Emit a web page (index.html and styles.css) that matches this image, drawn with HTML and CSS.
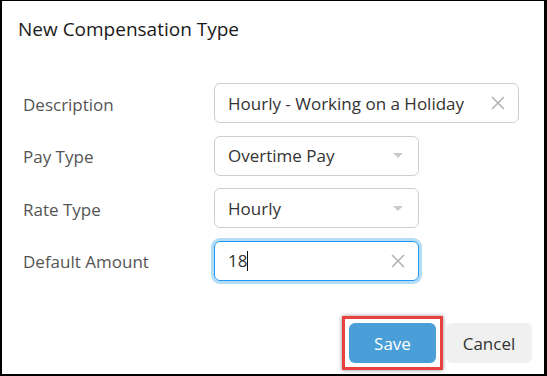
FILE: index.html
```html
<!doctype html>
<html>
<head>
    <meta charset="utf-8">
    <title>New Compensation Type</title>
    <link rel="stylesheet" href="styles.css">
</head>
<body>
    <div class="frame">
        <div class="dialog">
            <h1 class="dialog-title">New Compensation Type</h1>

            <div class="form">
                <label class="field-label">Description</label>
                <div class="input input-wide">
                    <span class="input-text">Hourly - Working on a Holiday</span>
                    <svg class="clear-icon" width="16" height="16" viewBox="0 0 16 16">
                        <path d="M2 2 L14 14 M14 2 L2 14" stroke="#b3b3b3" stroke-width="1.6" fill="none"/>
                    </svg>
                </div>

                <label class="field-label">Pay Type</label>
                <div class="input input-narrow">
                    <span class="input-text">Overtime Pay</span>
                    <span class="caret"></span>
                </div>

                <label class="field-label">Rate Type</label>
                <div class="input input-narrow">
                    <span class="input-text">Hourly</span>
                    <span class="caret"></span>
                </div>

                <label class="field-label">Default Amount</label>
                <div class="input input-narrow input-focus">
                    <span class="input-text">18<span class="cursor"></span></span>
                    <svg class="clear-icon" width="16" height="16" viewBox="0 0 16 16">
                        <path d="M2 2 L14 14 M14 2 L2 14" stroke="#b3b3b3" stroke-width="1.6" fill="none"/>
                    </svg>
                </div>
            </div>

            <div class="actions">
                <div class="highlight">
                    <button class="btn btn-save">Save</button>
                </div>
                <button class="btn btn-cancel">Cancel</button>
            </div>
        </div>
    </div>
</body>
</html>
```

FILE: styles.css
```css
html, body {
    margin: 0;
    padding: 0;
    background: #000;
}

body {
    width: 547px;
    height: 376px;
    font-family: "Open Sans", "Noto Sans", sans-serif;
}

.frame {
    box-sizing: border-box;
    width: 547px;
    height: 376px;
    padding: 1px 3px 2px 2px;
    background: #000;
}

.dialog {
    background: #fff;
    height: 100%;
    display: flex;
    flex-direction: column;
}

.dialog-title {
    margin: 0;
    padding: 16px 0 0 16px;
    font-size: 19px;
    font-weight: 400;
    line-height: 24px;
    color: #1a1a1a;
}

.form {
    display: grid;
    grid-template-columns: 191px auto;
    row-gap: 12.5px;
    padding: 42px 0 0 21px;
    align-items: center;
}

.field-label {
    font-size: 17px;
    color: #555;
    padding-top: 2px;
}

/* inputs */
.input {
    box-sizing: border-box;
    height: 40px;
    border: 1px solid #cfcfcf;
    border-radius: 6px;
    display: flex;
    align-items: center;
    justify-content: space-between;
    padding: 0 12px 0 13px;
    font-size: 17px;
    color: #333;
}

.input-wide {
    width: 305px;
}

.input-narrow {
    width: 205px;
}

.input-focus {
    border-color: #2196f3;
    box-shadow: 0 0 0 3px #b3dcf7;
}

.cursor {
    display: inline-block;
    width: 1px;
    height: 20px;
    background: #111;
    vertical-align: -4px;
}

.caret {
    width: 0;
    height: 0;
    border-left: 5px solid transparent;
    border-right: 5px solid transparent;
    border-top: 5px solid #cacaca;
    margin-right: 3px;
}

/* buttons */
.actions {
    margin-top: auto;
    display: flex;
    justify-content: flex-end;
    align-items: center;
    gap: 3px;
    padding: 0 12px 4px 0;
}

.highlight {
    border: 3px solid #e8423f;
    padding: 4px;
    box-shadow: 0 0 4px rgba(0, 0, 0, 0.45);
}

.btn {
    font-family: inherit;
    font-size: 17px;
    height: 40px;
    border: none;
    border-radius: 6px;
}

.btn-save {
    display: block;
    width: 87px;
    background: #4a9fd8;
    color: #fff;
}

.btn-cancel {
    width: 86px;
    background: #f0f0f0;
    color: #333;
}
```
